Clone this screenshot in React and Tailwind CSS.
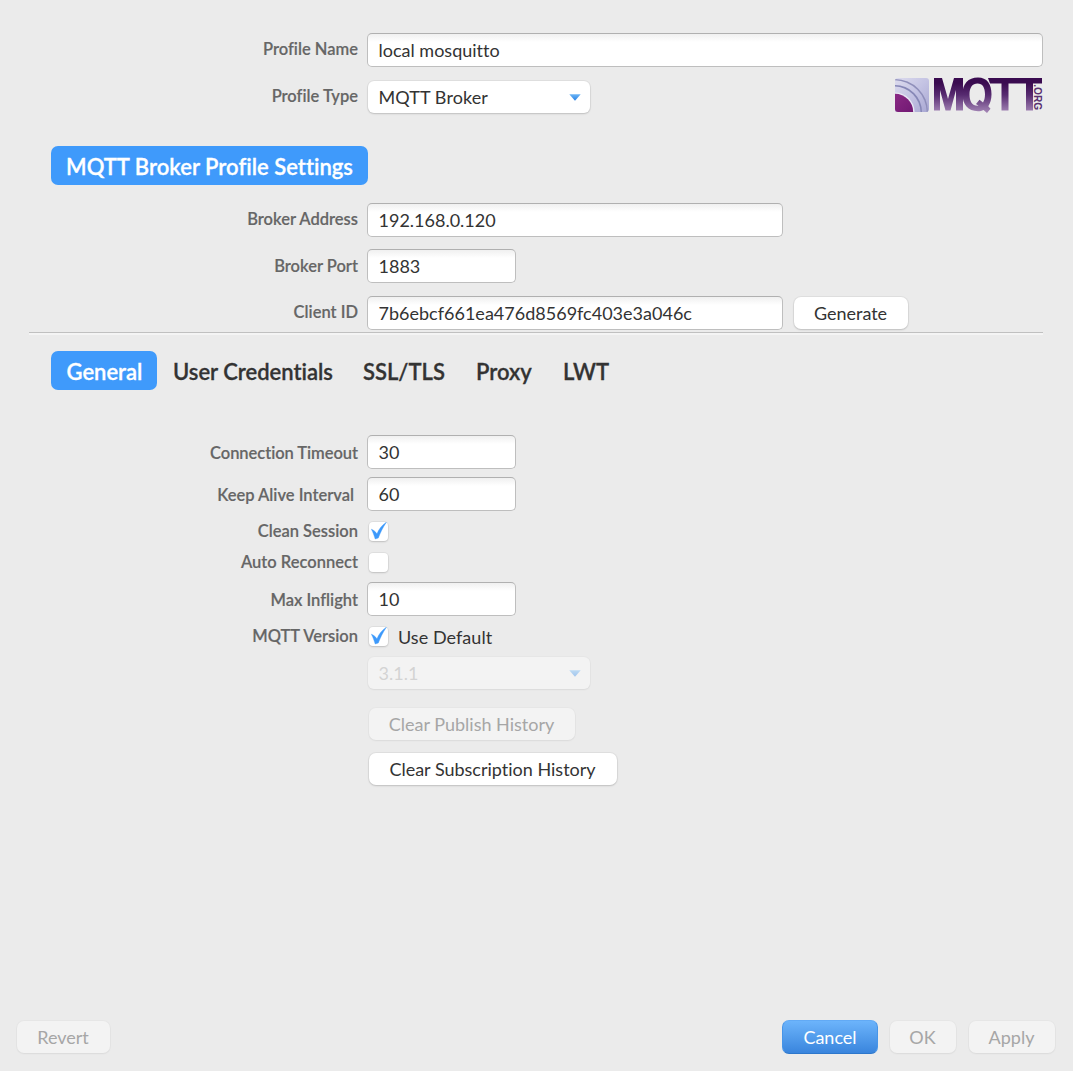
import React from "react";

const shadow = "shadow-[0_0_0_1px_rgba(0,0,0,0.045),0_1px_2px_rgba(0,0,0,0.15)]";
const faint = "shadow-[0_0_0_1px_rgba(0,0,0,0.02),0_1px_2px_rgba(0,0,0,0.05)]";

function Row({ label, className = "", labelClass = "", children }) {
  return (
    <div className={`flex items-center shrink-0 ${className}`}>
      <div className={`w-[358px] mr-2 text-right text-[16.5px] leading-5 font-semibold text-[#666666] [-webkit-text-stroke:0.15px] whitespace-nowrap ${labelClass}`}>
        {label}
      </div>
      {children}
    </div>
  );
}

function Field({ value, className }) {
  return (
    <div
      className={`ml-px h-[34px] self-start rounded-[5px] border border-[#bebebe] border-t-[#b0b0b0] bg-white bg-linear-to-b from-[#f0f0f0] to-white to-[8px] pl-[10.5px] flex items-center text-lg leading-6 text-[#333333] whitespace-nowrap ${className}`}
    >
      {value}
    </div>
  );
}

function Check({ checked }) {
  return (
    <div className={`ml-[3px] size-[19px] rounded-[4px] bg-white ${shadow}`}>
      {checked && (
        <svg viewBox="0 0 19 19" className="size-[19px]">
          <path d="M2.4 7.2 C4.7 8.2 6.4 9.6 8 11.8 C9.8 7.2 12.6 3.4 17.4 .2 C13.8 5.4 11.2 11 9.3 16 L6.2 17 C5.2 13.6 4 10.2 2.4 7.2Z" fill="#3d99fb" stroke="#3d99fb" strokeWidth=".4" />
        </svg>
      )}
    </div>
  );
}

function Arrow() {
  return (
    <svg viewBox="0 0 12 7" className="mt-px w-3 h-[7px] ml-auto mr-[9px]">
      <defs>
        <linearGradient id="arrow" x2="0" y2="1">
          <stop stopColor="#6db5f5" />
          <stop offset="1" stopColor="#2681e5" />
        </linearGradient>
      </defs>
      <path d="M.3 .3h11.4L6 6.7z" fill="url(#arrow)" />
    </svg>
  );
}

function Button({ children, className, disabled }) {
  return (
    <button
      className={`h-8 rounded-[7px] pr-px flex items-center justify-center text-lg leading-6 whitespace-nowrap shrink-0 ${
        disabled ? `bg-[#f3f3f3] text-[#a6a6a6] ${faint}` : `bg-white text-[#333333] ${shadow}`
      } ${className}`}
    >
      {children}
    </button>
  );
}

function Logo() {
  return (
    <svg viewBox="0 0 150 38" className="w-[150px] h-[38px] -mt-[5px] ml-auto mr-[30px]">
      <defs>
        <linearGradient id="ink" gradientUnits="userSpaceOnUse" x1="0" y1="2" x2="0" y2="36">
          <stop offset=".15" stopColor="#3a0b50" />
          <stop offset=".5" stopColor="#572b70" />
          <stop offset="1" stopColor="#a283b4" />
        </linearGradient>
        <linearGradient id="core" x1="0" y1="0" x2="1" y2="1">
          <stop stopColor="#97308d" />
          <stop offset="1" stopColor="#64116a" />
        </linearGradient>
        <linearGradient id="wave" gradientUnits="userSpaceOnUse" x1="2" y1="2" x2="36" y2="36">
          <stop stopColor="#dddcee" />
          <stop offset=".5" stopColor="#c4c3e3" />
          <stop offset="1" stopColor="#a9a8d3" />
        </linearGradient>
        <clipPath id="tile"><rect x="2" y="2" width="34" height="34" rx="3" /></clipPath>
      </defs>
      <g clipPath="url(#tile)">
        <rect x="2" y="2" width="34" height="34" fill="url(#wave)" />
        <circle cx="2" cy="36" r="33" fill="#8f8fba" />
        <circle cx="1" cy="37" r="32.8" fill="url(#wave)" />
        <circle cx="2" cy="36" r="27" fill="#8687b6" />
        <circle cx="1" cy="37" r="26.6" fill="url(#wave)" />
        <circle cx="2" cy="36" r="19.6" fill="#e9e8f5" />
        <circle cx="2" cy="36" r="18.2" fill="url(#core)" />
      </g>
      <g fill="url(#ink)">
        <path d="M41 34.5V2H49L55 23 61 2H70V34.5H63V14L57.5 34.5H52.5L47 14V34.5Z" />
        <path fillRule="evenodd" d="M85 1.5C75 1.5 69.5 8 69.5 18.3S75 35.2 85 35.2C87 35.2 89 34.7 90.5 33.9L94 37 97.5 32.8 95.3 30.2C97.3 27.4 98.5 23.3 98.5 18.3 98.5 8 94 1.5 85 1.5ZM84.5 7.5C89.5 7.5 92 11.5 92 18.3 92 21.8 91.3 24.4 90 26.5L86.5 23.8 83 28 85.5 29.8C79.5 30.4 76.5 26 76.5 18.3 76.5 11.5 79.5 7.5 84.5 7.5Z" />
        <path d="M95 2H149V7.5H140V34.5H133V7.5H115.5V34.5H108.5V7.5H97Z" />
      </g>
      <text transform="translate(141.3 8.2) rotate(90)" textLength="26" lengthAdjust="spacingAndGlyphs" className="font-['Liberation_Sans'] text-[10.5px] font-bold fill-[#583070]">.ORG</text>
    </svg>
  );
}

function Tab({ children, className }) {
  return <div className={`whitespace-nowrap ${className}`}>{children}</div>;
}

export default function App() {
  return (
    <div className="w-[1073px] h-[1071px] bg-[#ebebeb] font-['Lato',sans-serif] [font-variant-ligatures:none] flex flex-col overflow-hidden">
      <Row label="Profile Name" className="mt-[33px] h-[35px]" labelClass="-mt-[3px]">
        <Field value="local mosquitto" className="w-[676px]" />
      </Row>
      <Row label="Profile Type" className="mt-3 h-[34px]" labelClass="-mt-[3px]">
        <div className={`ml-[2px] w-[222px] h-8 -mt-px rounded-[6px] bg-white flex items-center pl-[10.5px] text-lg leading-6 tracking-[0.1px] text-[#333333] ${shadow}`}>
          MQTT Broker
          <Arrow />
        </div>
        <Logo />
      </Row>

      <div className="mt-8 ml-[51px] w-[317px] h-[39px] shrink-0 rounded-[7px] bg-[#3f9afb] text-white text-[22px] tracking-[0.02px] font-semibold [-webkit-text-stroke:0.3px] flex items-center justify-center pt-px whitespace-nowrap">
        MQTT Broker Profile Settings
      </div>

      <Row label="Broker Address" className="mt-[18px] h-[35px]" labelClass="-mt-[3px]">
        <Field value="192.168.0.120" className="w-[416px]" />
      </Row>
      <Row label="Broker Port" className="mt-[11px] h-[35px]" labelClass="-mt-[2px]">
        <Field value="1883" className="w-[149px]" />
      </Row>
      <Row label="Client ID" className="mt-3 h-[35px]" labelClass="-mt-[3px]">
        <Field value="7b6ebcf661ea476d8569fc403e3a046c" className="w-[416px] tracking-[0.01px]" />
        <Button className="ml-[11px] -mt-px w-[114px]">Generate</Button>
      </Row>
      <div className="mt-px ml-[29px] w-[1014px] h-[3px] shrink-0 border-t border-[#c0c0c0] bg-[#f4f4f4]" />

      <div className="mt-[16px] ml-[51px] h-[39px] shrink-0 flex items-center text-[22px] font-semibold text-[#333333] [-webkit-text-stroke:0.3px]">
        <Tab className="w-[106px] h-[39px] pl-[15.5px] pt-1 rounded-[7px] bg-[#3f9afb] text-white">General</Tab>
        <Tab className="ml-4 w-[190px] pt-[2px]">User Credentials</Tab>
        <Tab className="w-[113px] pt-[2px]">SSL/TLS</Tab>
        <Tab className="w-[87px] pt-[2px]">Proxy</Tab>
        <Tab className="pt-[2px]">LWT</Tab>
      </div>

      <Row label="Connection Timeout" className="mt-[45px] h-[35px]" labelClass="tracking-[-0.05px]">
        <Field value="30" className="w-[149px]" />
      </Row>
      <Row label="Keep Alive Interval" className="mt-[7px] h-[35px]" labelClass="pr-1">
        <Field value="60" className="w-[149px]" />
      </Row>
      <Row label="Clean Session" className="mt-[9px] h-5"><Check checked /></Row>
      <Row label="Auto Reconnect" className="mt-[11px] h-5"><Check /></Row>
      <Row label="Max Inflight" className="mt-[10px] h-[35px]" labelClass="pt-px">
        <Field value="10" className="w-[149px]" />
      </Row>
      <Row label="MQTT Version" className="mt-[9px] h-5">
        <Check checked />
        <span className="ml-[10px] mt-px text-lg leading-6 tracking-[0.05px] text-[#333333]">Use Default</span>
      </Row>
      <div className={`mt-[11px] ml-[368px] w-[222px] h-8 shrink-0 rounded-[6px] bg-[#f3f3f3] flex items-center pl-[10.5px] text-lg leading-6 text-[#d3d3d3] ${faint}`}>
        3.1.1
        <div className="ml-auto opacity-40"><Arrow /></div>
      </div>
      <div className="mt-[19px] ml-[369px] flex flex-col gap-[13px]">
        <Button disabled className="w-[206px]">Clear Publish History</Button>
        <Button className="w-[248px]">Clear Subscription History</Button>
      </div>

      <div className="mt-auto mb-[17px] px-[17px] pr-[18px] h-[34px] flex items-center">
        <Button disabled className="w-[93px]">Revert</Button>
        <button className="ml-auto w-24 h-[34px] rounded-[7px] bg-linear-to-b from-[#6cb4fb] to-[#3985dd] border border-t-[#62aaf5] border-x-[#4795e8] border-b-[#2d77cb] text-white text-lg">Cancel</button>
        <Button disabled className="ml-3 w-[66px]">OK</Button>
        <Button disabled className="ml-[13px] w-[86px]">Apply</Button>
      </div>
    </div>
  );
}
